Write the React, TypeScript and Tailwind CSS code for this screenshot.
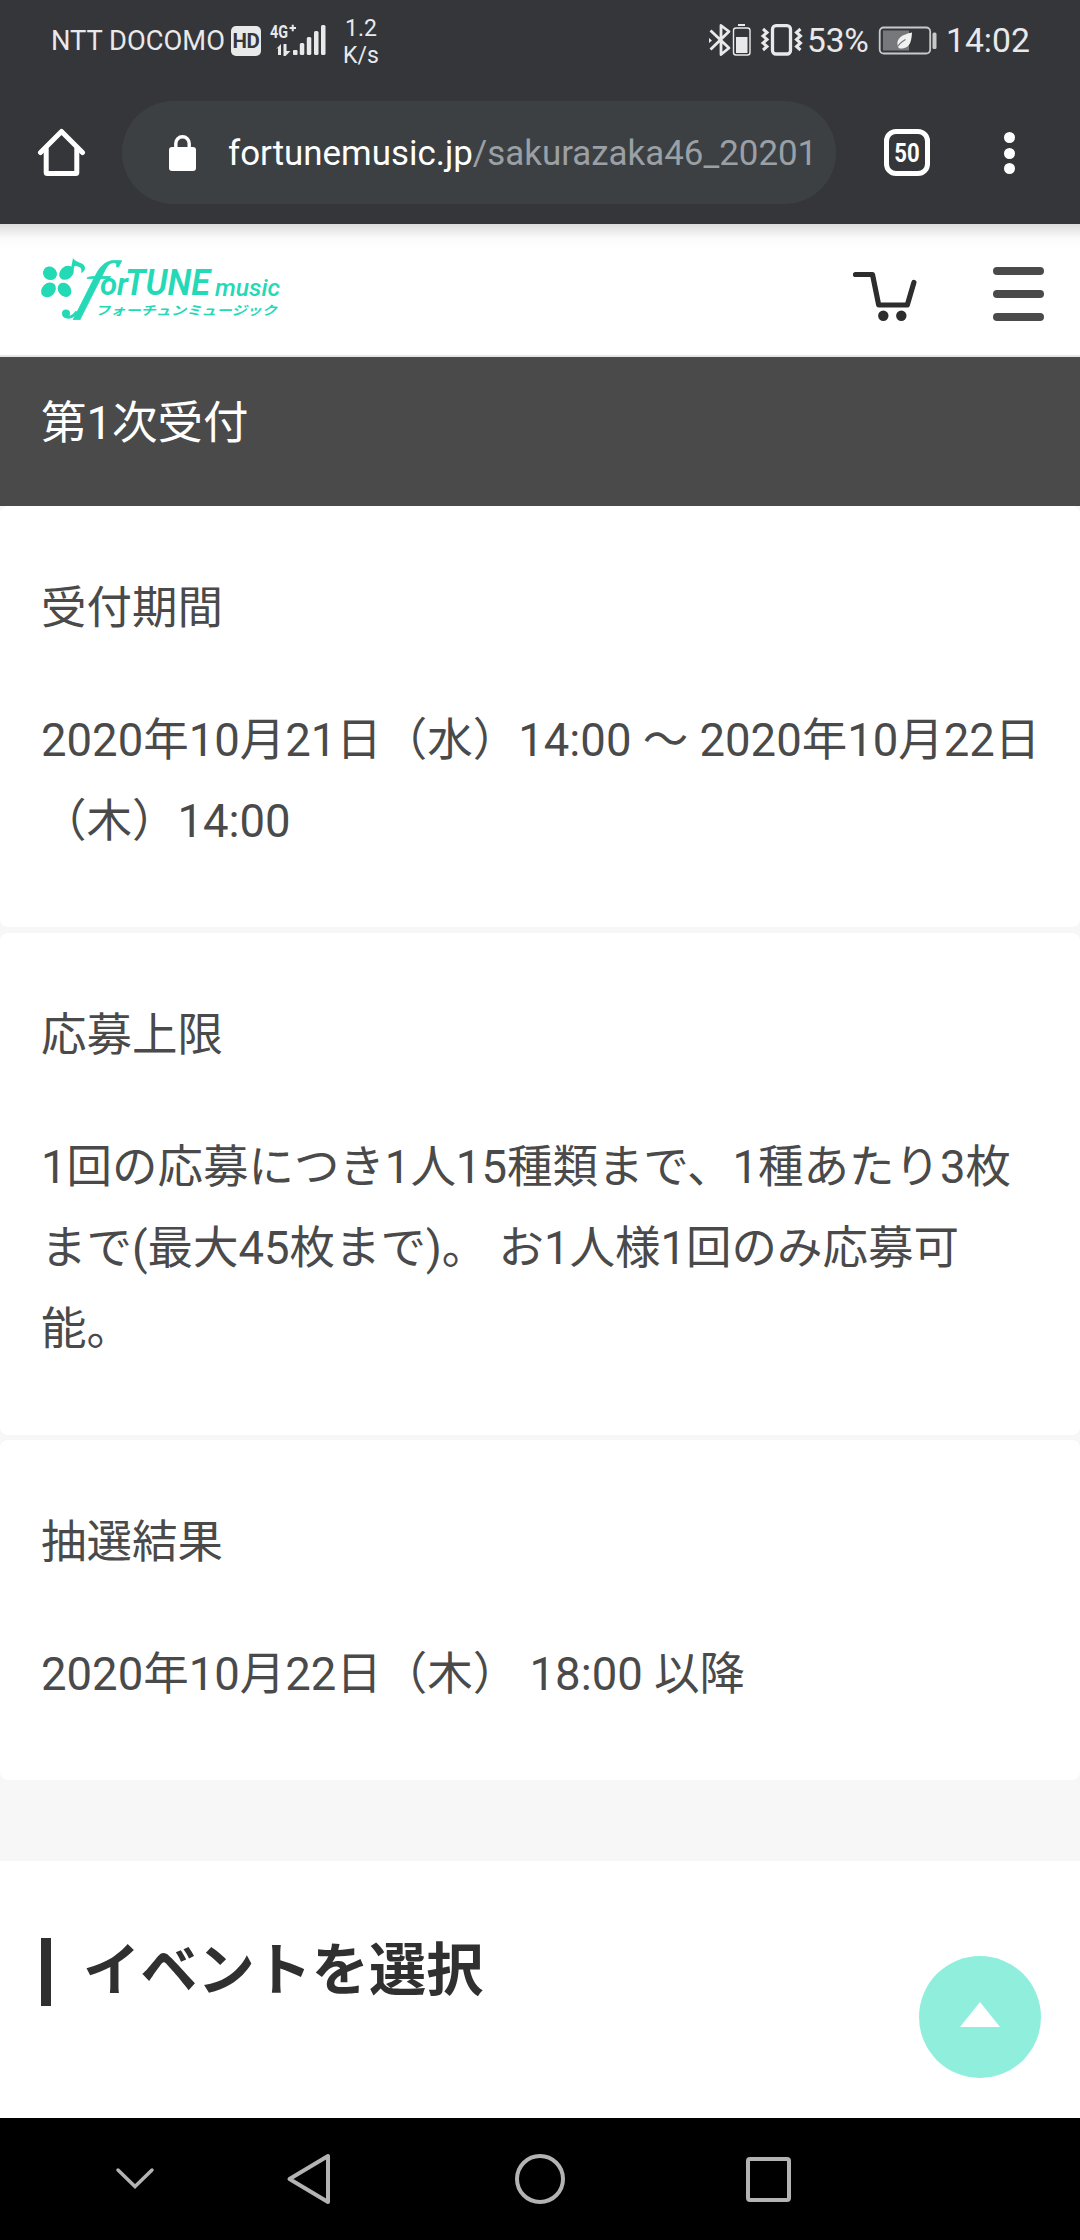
import type { ReactNode } from 'react';

function StatusBar() {
  return (
    <div className="flex h-20 items-start text-[#e9e9ea]">
      <span className="ml-[51px] mt-[25px] w-[177px] whitespace-nowrap text-[27.300px] leading-8">NTT DOCOMO</span>
      <span className="ml-[3px] mt-[26px] flex h-[30px] w-[30px] items-center justify-center rounded-[5px] bg-[#e9e9ea] text-[20.5px] font-bold leading-none tracking-[-0.5px] text-[#35363a]">
        HD
      </span>
      <svg className="ml-2 mt-[22px]" width="60" height="36" viewBox="269 22 60 36" fill="#e9e9ea">
        <text x="270" y="38" fontSize="18.5" fontWeight="700" textLength="18" lengthAdjust="spacingAndGlyphs">4G</text>
        <path d="M289.500 28h6.500M292.750 24.750v6.500" stroke="#e9e9ea" strokeWidth="2" />
        <path d="M276 49l5-5v11h-3v-7zM283.500 44h3v7h4l-5 5h-2z" />
        <rect x="293" y="50" width="4.500" height="5" rx="1" />
        <rect x="299.800" y="43" width="4.500" height="12" rx="1.500" />
        <rect x="306.800" y="37" width="4.500" height="18" rx="1.500" />
        <rect x="314" y="31" width="4.500" height="24" rx="1.500" />
        <rect x="321" y="25" width="4.500" height="30" rx="1.500" />
      </svg>
      <div className="ml-3.5 mt-[15px] w-9 text-center text-[23px] leading-[27px]">
        <div>1.2</div>
        <div>K/s</div>
      </div>
      <svg className="ml-[327px] mt-5" width="98" height="40" viewBox="706 20 98 40" fill="none" stroke="#e9e9ea">
        <path d="M710.500 30.500l18.500 17.500-8 6.500v-29l8 6-18.500 18" strokeWidth="2.800" strokeLinejoin="round" />
        <path d="M709 38v5l3-2.500z" fill="#e9e9ea" stroke="none" />
        <rect x="733.500" y="28" width="16.500" height="27" rx="2.500" strokeWidth="1.400" />
        <path d="M738 25h7" strokeWidth="2" />
        <path d="M736 37h11.500v16H736z" fill="#e9e9ea" stroke="none" />
        <rect x="772.500" y="25.700" width="18" height="28.300" rx="3.500" strokeWidth="3.300" />
        <path d="M763 29l4 3.500-4 3.500 4 3.500-4 3.500 4 3.500-4 3.500M800.500 29l-4 3.500 4 3.500-4 3.500 4 3.500-4 3.500 4 3.500" strokeWidth="3" />
      </svg>
      <span className="ml-[3px] mt-[21px] w-[63px] whitespace-nowrap text-[33.5px] leading-10 tracking-[-0.2px]">53%</span>
      <svg className="ml-[7px] mt-[26px]" width="60" height="30" viewBox="877 26 60 30" fill="none">
        <rect x="879.700" y="27.500" width="50.500" height="26" rx="4" stroke="#c9c9ca" strokeWidth="1.800" />
        <path d="M883 30.500h26v20h-26z" fill="#77787b" />
        <path d="M912 32.500c-10 2-15.500 6-14.500 12.500.3 3 2 4 5 3.500 8-1 9-8 9.500-16z" fill="#f1f1f1" />
        <path d="M895.500 49.500c3-5.500 6.500-8 10-10" stroke="#77787b" strokeWidth="1.300" />
        <rect x="932.500" y="32.500" width="4" height="16.500" rx="1.500" fill="#c9c9ca" />
      </svg>
      <span className="ml-[9px] mt-[21px] whitespace-nowrap text-[33.700px] leading-10">14:02</span>
    </div>
  );
}

function BrowserBar() {
  return (
    <div className="flex h-36 items-start">
      <svg className="ml-9 mt-[46px]" width="50" height="52" viewBox="36 126 50 52" fill="none" stroke="#fff" strokeWidth="5" strokeLinejoin="round" strokeLinecap="round">
        <path d="M40.500 152.500L61.500 131.500L82.500 152.500" />
        <path d="M46.200 149v23.500q0 1 1 1h28.600q1 0 1-1V149" />
      </svg>
      <div className="ml-9 mt-[21px] flex h-[103px] w-[714px] items-center rounded-full bg-[#3c4043] pl-[47px]">
        <svg width="27" height="36" viewBox="0 0 27 36">
          <path d="M6.800 14V8.500a6.700 6.700 0 0 1 13.400 0V14" fill="none" stroke="#fff" strokeWidth="3.400" />
          <rect y="12" width="27" height="24" rx="3" fill="#fff" />
        </svg>
        <div className="ml-8 mt-0.5 w-[584px] overflow-hidden whitespace-nowrap text-[34.900px] leading-[46px] text-[#9aa0a6]">
          <span className="text-white">fortunemusic.jp</span>/sakurazaka46_20201
        </div>
      </div>
      <div className="ml-12 mt-[49px] flex h-[47px] w-[46px] items-center justify-center rounded-[12px] border-[5px] border-white text-[26px] font-bold leading-none text-white">
        <span className="scale-x-[0.85]">50</span>
      </div>
      <div className="ml-[74px] mt-[52px] flex flex-col gap-[4.500px]">
        <i className="size-[11px] rounded-full bg-white" />
        <i className="size-[11px] rounded-full bg-white" />
        <i className="size-[11px] rounded-full bg-white" />
      </div>
    </div>
  );
}

function Logo() {
  return (
    <svg className="ml-9 mt-2" width="250" height="112" viewBox="36 232 250 112" fill="#24d9b5">
      <ellipse cx="50" cy="273.300" rx="7.200" ry="6.600" transform="rotate(35 50 273.300)" />
      <ellipse cx="66.500" cy="272.800" rx="8" ry="6.200" transform="rotate(-40 66.500 272.800)" />
      <ellipse cx="48.500" cy="289.800" rx="8.200" ry="6.500" transform="rotate(-45 48.500 289.800)" />
      <ellipse cx="64.500" cy="289.800" rx="7.700" ry="6.200" transform="rotate(50 64.500 289.800)" />
      <path d="M70.500 271l2.500-13c2 5 12 4 12 10 0 3-2 4-4 5 2-6-3-7-6.500-7l-2 7z" />
      <text transform="translate(76 305.500) scale(1.3 1) skewX(-12)" fontFamily="Liberation Serif" fontStyle="italic" fontSize="65" stroke="#24d9b5" strokeWidth="0.500">f</text>
      <circle cx="66" cy="313.500" r="4" />
      <path d="M64 315.500c4 3 9 2 13-4" fill="none" stroke="#24d9b5" strokeWidth="3" />
      <text x="100" y="295" fontSize="32" fontStyle="italic" fontWeight="600" textLength="28" lengthAdjust="spacingAndGlyphs">or</text>
      <text x="125" y="295" fontSize="36.500" fontStyle="italic" fontWeight="600" textLength="85" lengthAdjust="spacingAndGlyphs">TUNE</text>
      <text x="215" y="295.500" fontSize="24" fontStyle="italic" fontWeight="500" textLength="65" lengthAdjust="spacingAndGlyphs">music</text>
      <text transform="translate(95 314.500) scale(1 0.830) skewX(-14)" fontFamily="Noto Sans CJK JP" fontSize="15.200" fontWeight="700" textLength="182">フォーチュンミュージック</text>
    </svg>
  );
}

function SiteHeader() {
  return (
    <div className="flex h-[133px] items-start border-b-2 border-[#e6e6e6] bg-linear-to-b from-[#dcdcdc] via-[#fafafa] via-[14px] to-white to-[24px]">
      <Logo />
      <svg className="ml-[564px] mt-[45px]" width="70" height="56" viewBox="850 269 70 56" fill="none" stroke="#2d2d2d" strokeWidth="5.200" strokeLinecap="round" strokeLinejoin="round">
        <path d="M855.500 274.500h17l6.200 30.500h28.600l6.600-22.500" />
        <circle cx="883.300" cy="315.700" r="5.200" fill="#2d2d2d" stroke="none" />
        <circle cx="901.300" cy="315.700" r="5.200" fill="#2d2d2d" stroke="none" />
      </svg>
      <div className="ml-[73px] mt-[43px] flex w-[51px] flex-col gap-[15px]">
        <i className="h-2 rounded-full bg-[#4a4a4a]" />
        <i className="h-2 rounded-full bg-[#4a4a4a]" />
        <i className="h-2 rounded-full bg-[#4a4a4a]" />
      </div>
    </div>
  );
}

function Card({ title, children }: { title: string; children: ReactNode }) {
  return (
    <section className="rounded-lg bg-white px-[41px] pb-[65px] pt-[62px]">
      <h3>{title}</h3>
      <p className="mt-[51px] whitespace-nowrap">{children}</p>
    </section>
  );
}

function NavBar() {
  return (
    <nav className="flex h-[122px] items-center bg-black">
      <svg className="ml-[115px]" width="40" height="60" viewBox="115 2149 40 60" fill="none" stroke="#b3b3b3" strokeWidth="3.500" strokeLinecap="round">
        <path d="M118 2170l17 16.500 17-16.500" />
      </svg>
      <svg className="ml-[130px]" width="48" height="60" viewBox="285 2149 48 60" fill="none" stroke="#b3b3b3" strokeWidth="4" strokeLinejoin="round">
        <path d="M289.500 2179l38.500-23v46z" />
      </svg>
      <span className="ml-[182px] size-[50px] rounded-full border-4 border-[#b3b3b3]" />
      <span className="ml-[181px] size-[45px] rounded-[4px] border-4 border-[#b3b3b3]" />
    </nav>
  );
}

export default function App() {
  return (
    <div className="relative h-[2240px] w-[1080px] overflow-hidden bg-white font-['Roboto','Noto_Sans_CJK_JP',sans-serif]">
      <header className="bg-[#35363a]">
        <StatusBar />
        <BrowserBar />
      </header>
      <SiteHeader />
      <main lang="ja" className="text-[45.470px] leading-[81px] text-[#4a4a4a]">
        <h2 className="h-[149px] bg-[#4a4a4a] pl-[41px] pt-[25.500px] text-white">第1次受付</h2>
        <div className="flex h-[1355px] flex-col gap-[5.500px] bg-[#f7f7f7]">
          <Card title="受付期間">
            2020年10月21日（水）14:00 ～ 2020年10月22日
            <br />
            （木）14:00
          </Card>
          <Card title="応募上限">
            1回の応募につき1人15種類まで、1種あたり3枚
            <br />
            まで(最大45枚まで)。 お1人様1回のみ応募可
            <br />
            能。
          </Card>
          <Card title="抽選結果">2020年10月22日（木） 18:00 以降</Card>
        </div>
        <div className="flex h-[257px] items-start pl-[41px] pt-[77px]">
          <span className="h-[68px] w-[10px] bg-[#303030]" />
          <h2 className="-mt-px ml-8 text-[57.200px] font-bold leading-[68px] text-[#303030]">イベントを選択</h2>
        </div>
      </main>
      <NavBar />
      <button aria-label="ページの先頭へ" className="absolute left-[919px] top-[1956px] flex size-[122px] justify-center rounded-full bg-[#90eedd] pt-[46px]">
        <svg width="40" height="25" viewBox="0 0 40 25" fill="#fff">
          <path d="M20 0L40 25H0z" />
        </svg>
      </button>
    </div>
  );
}
